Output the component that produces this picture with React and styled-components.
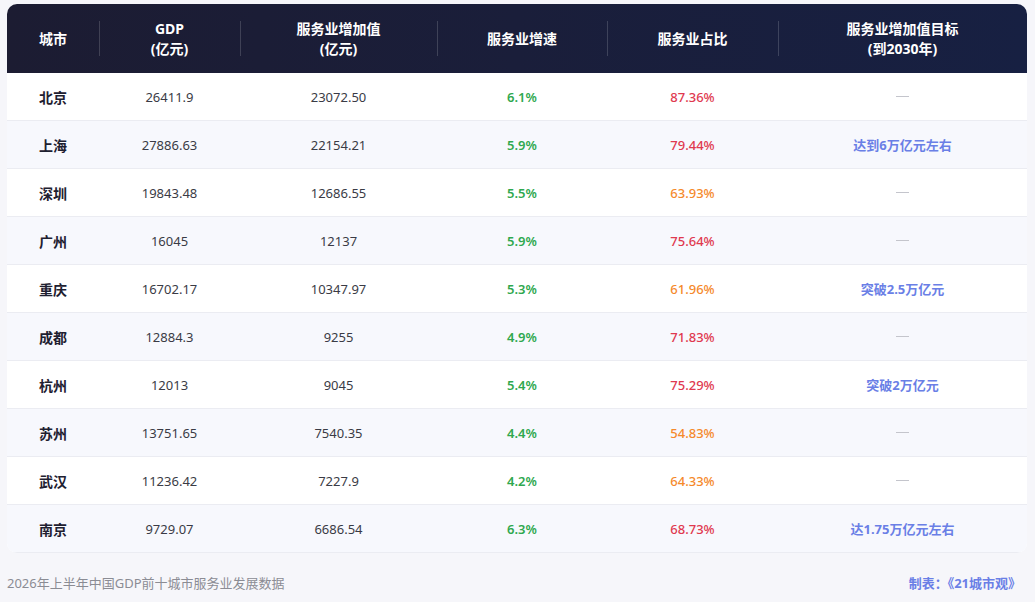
import styled, { createGlobalStyle } from 'styled-components';

const GlobalStyle = createGlobalStyle`
  html, body {
    margin: 0;
    padding: 0;
    background: #f6f6fa;
  }
  body {
    font-family: "Noto Sans", "Noto Sans CJK SC", sans-serif;
  }
`

// column widths taken from the header separators
const columns = '92px 141px 197px 170px 171px 1fr';

const rows = [
  { city: '北京', gdp: '26411.9', added: '23072.50', growth: '6.1%', share: '87.36%', target: '' },
  { city: '上海', gdp: '27886.63', added: '22154.21', growth: '5.9%', share: '79.44%', target: '达到6万亿元左右' },
  { city: '深圳', gdp: '19843.48', added: '12686.55', growth: '5.5%', share: '63.93%', target: '' },
  { city: '广州', gdp: '16045', added: '12137', growth: '5.9%', share: '75.64%', target: '' },
  { city: '重庆', gdp: '16702.17', added: '10347.97', growth: '5.3%', share: '61.96%', target: '突破2.5万亿元' },
  { city: '成都', gdp: '12884.3', added: '9255', growth: '4.9%', share: '71.83%', target: '' },
  { city: '杭州', gdp: '12013', added: '9045', growth: '5.4%', share: '75.29%', target: '突破2万亿元' },
  { city: '苏州', gdp: '13751.65', added: '7540.35', growth: '4.4%', share: '54.83%', target: '' },
  { city: '武汉', gdp: '11236.42', added: '7227.9', growth: '4.2%', share: '64.33%', target: '' },
  { city: '南京', gdp: '9729.07', added: '6686.54', growth: '6.3%', share: '68.73%', target: '达1.75万亿元左右' },
];

const App = () => {
  return (
    <Page>
      <GlobalStyle />
      <Card>
        <HeadRow>
          <HeadCell $left>城市</HeadCell>
          <HeadCell $sep>GDP<br />(亿元)</HeadCell>
          <HeadCell $sep>服务业增加值<br />(亿元)</HeadCell>
          <HeadCell $sep>服务业增速</HeadCell>
          <HeadCell $sep>服务业占比</HeadCell>
          <HeadCell $sep>服务业增加值目标<br />(到2030年)</HeadCell>
        </HeadRow>
        {rows.map((r, i) => (
          <Row key={r.city} $alt={i % 2 === 1}>
            <City>{r.city}</City>
            <Num>{r.gdp}</Num>
            <Num>{r.added}</Num>
            <Growth>{r.growth}</Growth>
            <Share $high={parseFloat(r.share) >= 65}>{r.share}</Share>
            {r.target ? <Target>{r.target}</Target> : <Cell><Dash /></Cell>}
          </Row>
        ))}
      </Card>
      <Footer>
        <Note>2026年上半年中国GDP前十城市服务业发展数据</Note>
        <Credit>制表：《21城市观》</Credit>
      </Footer>
    </Page>
  )
}

const Page = styled.div`
  width: 1035px;
  height: 602px;
  box-sizing: border-box;
  padding: 4px 8px 0 7px;
`

const Card = styled.div`
  background: #ffffff;
  border-radius: 10px;
  overflow: hidden;
`

const HeadRow = styled.div`
  display: grid;
  grid-template-columns: ${columns};
  height: 69px;
  background: linear-gradient(90deg, #1c1c32 0%, #1a1e3a 50%, #172042 100%);
`

const HeadCell = styled.div`
  position: relative;
  display: flex;
  align-items: center;
  justify-content: ${(p) => (p.$left ? 'flex-start' : 'center')};
  padding-left: ${(p) => (p.$left ? '32px' : '0')};
  text-align: center;
  color: #ffffff;
  font-size: 14px;
  font-weight: 700;
  line-height: 20px;
  &::before {
    content: '';
    display: ${(p) => (p.$sep ? 'block' : 'none')};
    position: absolute;
    left: 0;
    top: 17px;
    bottom: 17px;
    width: 1px;
    background: rgba(255, 255, 255, 0.16);
  }
`

const Row = styled.div`
  display: grid;
  grid-template-columns: ${columns};
  height: 48px;
  box-sizing: border-box;
  border-bottom: 1px solid #ebecf2;
  background: ${(p) => (p.$alt ? '#f7f8fd' : '#ffffff')};
`

const Cell = styled.div`
  display: flex;
  align-items: center;
  justify-content: center;
  font-size: 13px;
  color: #3a3b45;
`

const City = styled(Cell)`
  justify-content: flex-start;
  padding-left: 32px;
  font-size: 14px;
  font-weight: 700;
  color: #1e2030;
`

const Num = styled(Cell)``

const Growth = styled(Cell)`
  color: #2fa84f;
  font-weight: 600;
`

const Share = styled(Cell)`
  color: ${(p) => (p.$high ? '#e0394f' : '#f5892b')};
  font-weight: 500;
`

const Target = styled(Cell)`
  color: #6a7fe6;
  font-weight: 700;
`

const Dash = styled.span`
  display: block;
  width: 13px;
  height: 1px;
  background: #c4c5cc;
`

const Footer = styled.div`
  display: flex;
  justify-content: space-between;
  align-items: center;
  padding: 20px 6px 0 0;
  font-size: 13px;
`

const Note = styled.span`
  color: #8b8c94;
`

const Credit = styled.span`
  color: #6a7fe6;
  font-weight: 700;
`

export default App
